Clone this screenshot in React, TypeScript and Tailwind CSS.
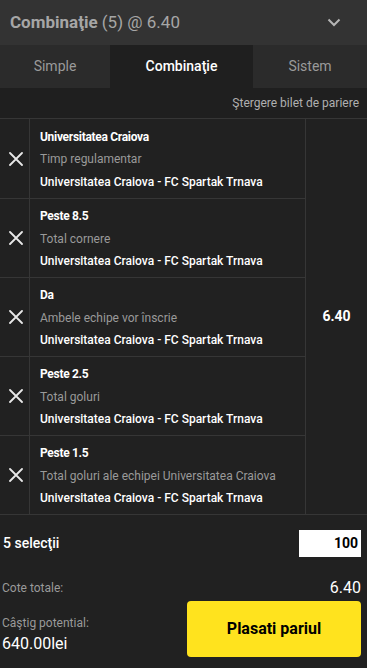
import React from 'react'

const selections = [
    { pick: 'Universitatea Craiova', market: 'Timp regulamentar' },
    { pick: 'Peste 8.5', market: 'Total cornere' },
    { pick: 'Da', market: 'Ambele echipe vor înscrie' },
    { pick: 'Peste 2.5', market: 'Total goluri' },
    { pick: 'Peste 1.5', market: 'Total goluri ale echipei Universitatea Craiova' },
]

function CloseIcon() {
    return (
        <svg width="14" height="14" viewBox="0 0 14 14" fill="none">
            <path d="M1 1L13 13M13 1L1 13" stroke="#e8e8e8" strokeWidth="1.8" strokeLinecap="round" />
        </svg>
    )
}

export default function App() {
    return (
        <div className="w-[367px] h-[668px] bg-[#212121] text-white overflow-hidden" style={{ fontFamily: 'Roboto, "Noto Sans", sans-serif' }}>
            {/* header */}
            <div className="h-[45px] bg-[#333333] flex items-center justify-between pl-[10px] pr-[26px]">
                <div className="text-[17px] text-[#a6a6a6]">
                    <span className="font-bold">Combinaţie</span> (5) @ 6.40
                </div>
                <svg width="14" height="9" viewBox="0 0 14 9" fill="none">
                    <path d="M1.5 1.5L7 7L12.5 1.5" stroke="#b5b5b5" strokeWidth="2" />
                </svg>
            </div>

            {/* tabs */}
            <div className="h-[43px] bg-[#2b2b2b] flex text-[14px]">
                <div className="w-[110px] flex items-center justify-center text-[#9a9a9a]">Simple</div>
                <div className="w-[143px] flex items-center justify-center bg-[#1f1f1f] text-white font-medium">Combinaţie</div>
                <div className="flex-1 flex items-center justify-center text-[#9a9a9a]">Sistem</div>
            </div>

            <div className="h-[31px] bg-[#1f1f1f] flex items-center justify-end pr-[8px] text-[12px] text-[#b0b0b0] border-b border-[#363636]">
                Ştergere bilet de pariere
            </div>

            {/* selections */}
            <div className="flex border-b border-[#363636]">
                <div className="flex-1">
                    {selections.map((s, i) => (
                        <div key={i} className={`flex h-[79px] ${i > 0 ? 'border-t border-[#363636]' : ''}`}>
                            <div className="w-[30px] flex items-center justify-center border-r border-[#363636] pl-[2px]">
                                <CloseIcon />
                            </div>
                            <div className="flex-1 flex flex-col justify-center pl-[10px] pt-[2px] text-[12px] leading-[22.5px] border-r border-[#363636]">
                                <div className="font-bold tracking-[-0.3px]">{s.pick}</div>
                                <div className="text-[#9a9a9a]">{s.market}</div>
                                <div className="font-medium">Universitatea Craiova - FC Spartak Trnava</div>
                            </div>
                        </div>
                    ))}
                </div>
                <div className="w-[61px] flex items-center justify-center text-[14px] font-bold">6.40</div>
            </div>

            {/* footer */}
            <div className="px-[2px] pr-[6px]">
                <div className="flex items-center justify-between h-[56px]">
                    <span className="text-[14px] font-medium pl-[1px]">5 selecţii</span>
                    <div className="w-[62px] h-[27px] bg-white text-black text-[14px] font-bold flex items-center justify-end pr-[3px]">100</div>
                </div>
                <div className="flex items-center justify-between h-[34px]">
                    <span className="text-[12px] text-[#9a9a9a]">Cote totale:</span>
                    <span className="text-[16px]">6.40</span>
                </div>
                <div className="flex items-start justify-between -mt-[4px]">
                    <div className="pt-[13px]">
                        <div className="text-[12px] text-[#9a9a9a]">Câştig potential:</div>
                        <div className="text-[16px]">640.00lei</div>
                    </div>
                    <button className="w-[174px] h-[56px] rounded-[4px] bg-[#ffe31e] text-black text-[16px] font-bold">Plasati pariul</button>
                </div>
            </div>
        </div>
    )
}
